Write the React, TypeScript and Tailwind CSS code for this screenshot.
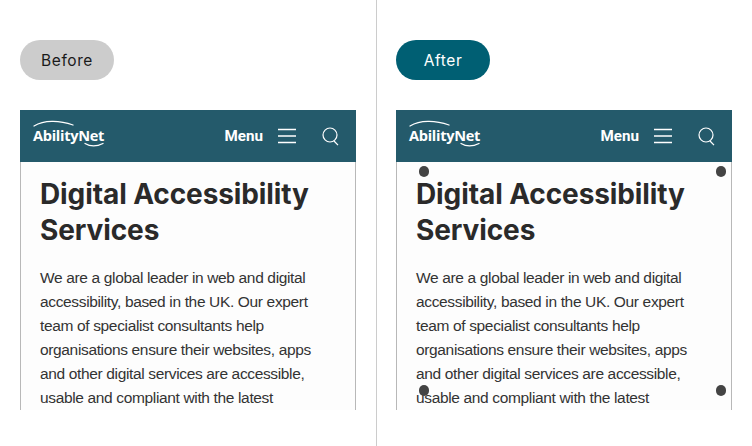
function Logo() {
  return (
    <div className="relative pb-[2px] pl-[1px]">
      <span className="block font-['Open_Sans',sans-serif] text-[14.6px] font-bold leading-[22px] tracking-[-0.3px] text-white">
        AbilityNet
      </span>
      <svg className="absolute left-0 top-[-9px]" width="72" height="40" viewBox="0 0 72 40" fill="none" stroke="#fff" strokeLinecap="round">
        <path d="M2 11C12 5 27 5 41 10" strokeWidth="1.3" />
        <path d="M53 28.5C58 31.5 65 31.5 71 28.5" strokeWidth="1.3" />
      </svg>
    </div>
  );
}

function SiteHeader() {
  return (
    <div className="flex h-[52px] items-center bg-[#245a6b] pl-[12px] pr-[17px]">
      <Logo />
      <span className="ml-auto pt-[1px] font-['Roboto',sans-serif] text-[15.2px] font-bold text-white">Menu</span>
      <svg className="ml-[15px]" width="18" height="16" viewBox="0 0 18 16" stroke="#fff" strokeWidth="1.6">
        <path d="M0 1.5H18M0 8H18M0 14.5H18" />
      </svg>
      <svg className="ml-[26px]" width="17" height="19" viewBox="0 0 17 19" fill="none" stroke="#fff" strokeWidth="1.2">
        <circle cx="8" cy="8" r="7" />
        <path d="M12 14L16 18.2" />
      </svg>
    </div>
  );
}

function Dots() {
  return (
    <div className="absolute left-[23px] top-[56px] flex h-[230px] w-[307px] flex-col justify-between">
      {[0, 1].map((row) => (
        <div key={row} className="flex justify-between">
          <span className="h-[11px] w-[10px] rounded-full bg-[#444]" />
          <span className="h-[11px] w-[10px] rounded-full bg-[#444]" />
        </div>
      ))}
    </div>
  );
}

function Phone({ dots }: { dots?: boolean }) {
  return (
    <div className="relative mt-[30px] h-[300px] w-[336px] overflow-hidden">
      <SiteHeader />
      <div className="h-[248px] border-x border-[#b8b8b8] bg-[#fdfdfd] pl-[19px] pr-[16px] pt-[14px]">
        <h2 className="font-['Inter',sans-serif] text-[28px] font-bold leading-[36px] tracking-[-0.1px] text-[#2a2a2a]">
          Digital Accessibility Services
        </h2>
        <p className="mt-[18px] pr-[14px] font-['Liberation_Sans',sans-serif] text-[15.5px] leading-[24px] tracking-[-0.35px] text-[#333]">
          We are a global leader in web and digital accessibility, based in the UK. Our expert team of specialist consultants help organisations ensure their websites, apps and other digital services are accessible, usable and compliant with the latest
        </p>
      </div>
      {dots && <Dots />}
    </div>
  );
}

export default function App() {
  return (
    <div className="flex h-[446px] w-[752px] overflow-hidden bg-white">
      <section className="w-[376px] pl-[20px] pt-[40px]">
        <div className="flex h-[40px] w-[94px] items-center justify-center rounded-full bg-[#cccccc] pt-[1px] font-['Inter',sans-serif] text-[15.5px] tracking-[0.6px] text-[#1a1a1a]">
          Before
        </div>
        <Phone />
      </section>
      <section className="w-[376px] border-l border-[#cccccc] pl-[19px] pt-[40px]">
        <div className="flex h-[40px] w-[94px] items-center justify-center rounded-full bg-[#005f73] pt-[1px] font-['Inter',sans-serif] text-[15.5px] tracking-[0.6px] text-white">
          After
        </div>
        <Phone dots />
      </section>
    </div>
  );
}
